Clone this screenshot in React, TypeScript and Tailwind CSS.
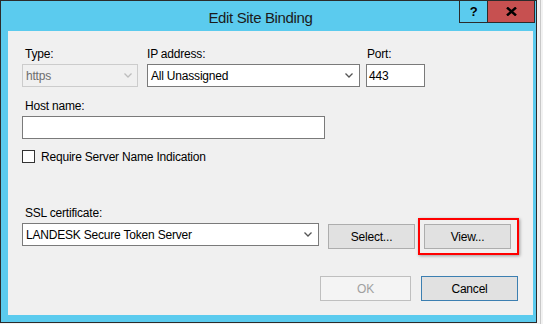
import React from "react";

const font = { fontFamily: '"Liberation Sans", Arial, sans-serif' };

function Chevron({ color }: { color: string }) {
  return (
    <svg width="8" height="5" viewBox="0 0 8 5" className="shrink-0">
      <path d="M0.5 0.5 L4 4 L7.5 0.5" fill="none" stroke={color} strokeWidth="1.3" />
    </svg>
  );
}

export default function App() {
  return (
    <div className="w-[543px] h-[324px] bg-[#f2f2f2] overflow-hidden relative text-[12px] leading-[16px] tracking-[-0.2px]" style={font}>
      <div className="absolute left-[540px] top-0 w-px h-[324px] bg-[#c8c8c8]" />
      <div className="w-[537px] h-[323px] border border-[#2b2b2b] bg-[#5bcbee] flex flex-col relative">
        {/* title bar */}
        <div className="h-[30px] shrink-0 relative">
          <div className="absolute left-0 right-[16px] top-[8px] text-center text-[15px] leading-[18px] tracking-[-0.35px] text-[#1b1b1b]">
            Edit Site Binding
          </div>
          <div className="absolute top-[-1px] right-[1px] flex h-[23px]">
            <div className="w-[29px] h-[23px] border border-[#2b2b2b] flex items-center justify-center font-bold text-[13px] text-black">?</div>
            <div className="w-[47px] h-[23px] border border-l-0 border-[#2b2b2b] bg-[#c75050] flex items-center justify-center">
              <svg width="11" height="9" viewBox="0 0 11 9">
                <path d="M1 0.5 L10 8.5 M10 0.5 L1 8.5" stroke="#000" strokeWidth="2.4" />
              </svg>
            </div>
          </div>
        </div>
        {/* content */}
        <div className="ml-[7px] mr-[3px] mb-[7px] flex-1 bg-[#f0f0f0] pl-[14px] pt-[15px] flex flex-col text-[#000]">
          {/* row 1 */}
          <div className="flex">
            <div className="w-[116px] flex flex-col">
              <div className="pl-[3px] h-[16px] mb-[2px]">Type:</div>
              <div className="h-[23px] border border-[#cccccc] bg-[#f0f0f0] flex items-center justify-between pl-[3px] pr-[5px] text-[#6d6d6d]">
                <span>https</span>
                <Chevron color="#bdbdbd" />
              </div>
            </div>
            <div className="w-[213px] ml-[9px] flex flex-col">
              <div className="h-[16px] mb-[2px]">IP address:</div>
              <div className="h-[23px] border border-[#7a7a7a] bg-white flex items-center justify-between pl-[3px] pr-[6px]">
                <span>All Unassigned</span>
                <Chevron color="#555555" />
              </div>
            </div>
            <div className="w-[59px] ml-[6px] flex flex-col">
              <div className="pl-[1px] h-[16px] mb-[2px]">Port:</div>
              <div className="h-[23px] border border-[#7a7a7a] bg-white flex items-center pl-[2px]">443</div>
            </div>
          </div>
          {/* host name */}
          <div className="mt-[11px] pl-[3px] h-[16px] mb-[2px]">Host name:</div>
          <div className="w-[303px] h-[23px] border border-[#7a7a7a] bg-white" />
          {/* checkbox */}
          <div className="mt-[11px] flex items-center h-[13px]">
            <div className="w-[13px] h-[13px] border border-[#333333] bg-white" />
            <span className="ml-[6px]">Require Server Name Indication</span>
          </div>
          {/* SSL */}
          <div className="mt-[42px] pl-[3px] h-[16px] mb-[2px]">SSL certificate:</div>
          <div className="flex items-start">
            <div className="w-[297px] h-[23px] border border-[#7a7a7a] bg-white flex items-center justify-between pl-[3px] pr-[6px]">
              <span>LANDESK Secure Token Server</span>
              <Chevron color="#555555" />
            </div>
            <div className="ml-[9px] mt-[1px] w-[87px] h-[25px] border border-[#adadad] bg-[#e1e1e1] flex items-center justify-center">Select...</div>
            <div className="ml-[9px] mt-[1px] w-[87px] h-[25px] border border-[#adadad] bg-[#e1e1e1] flex items-center justify-center relative">
              View...
              <div className="absolute -left-[7px] -top-[7px] w-[101px] h-[37px] border-2 border-[#ff0000] shadow-[1px_1px_3px_rgba(0,0,0,0.35)]" />
            </div>
          </div>
          {/* bottom buttons */}
          <div className="mt-[27px] flex justify-end pr-[15px]">
            <div className="w-[91px] h-[25px] border border-[#bfbfbf] bg-[#f4f4f4] text-[#a0a0a0] flex items-center justify-center">OK</div>
            <div className="ml-[10px] w-[97px] h-[25px] border border-[#3c7fb1] bg-[#e1e1e1] flex items-center justify-center">Cancel</div>
          </div>
        </div>
      </div>
    </div>
  );
}
